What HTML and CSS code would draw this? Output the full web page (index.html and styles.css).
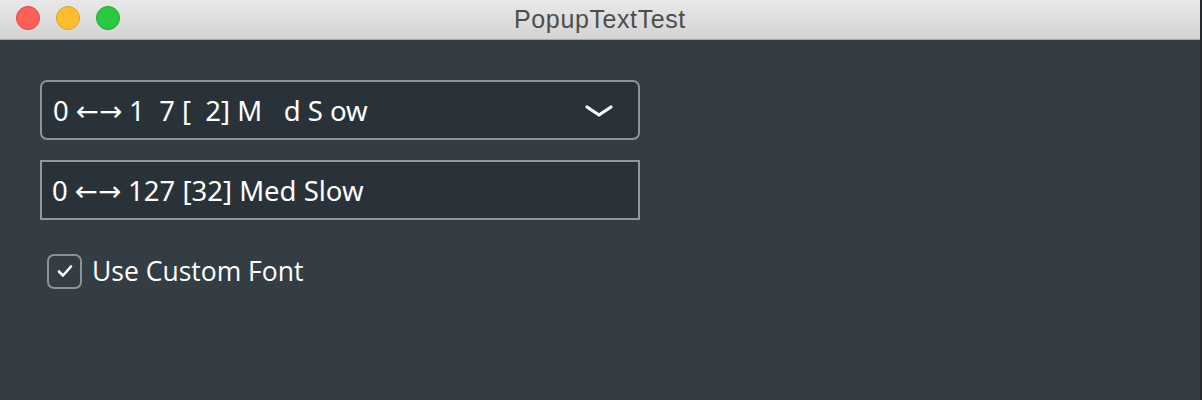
FILE: index.html
```html
<!DOCTYPE html>
<html>
<head>
<meta charset="utf-8">
<link rel="stylesheet" href="styles.css">
</head>
<body>
<div class="window">
  <div class="titlebar">
    <div class="lights">
      <span class="light red"></span>
      <span class="light yellow"></span>
      <span class="light green"></span>
    </div>
    <div class="title">PopupTextTest</div>
  </div>
  <div class="content">
    <div class="popup">
      <span class="popup-text">0 ←→ 1&nbsp;&nbsp;7 [&nbsp;&nbsp;2] M&nbsp;&nbsp;&nbsp;d S ow</span>
      <svg class="chevron" width="30" height="14" viewBox="0 0 30 14"><path d="M3 3 L15 11 L27 3" fill="none" stroke="#ffffff" stroke-width="3.2" stroke-linecap="round" stroke-linejoin="round"/></svg>
    </div>
    <div class="field">0 ←→ 127 [32] Med Slow</div>
    <label class="check">
      <span class="box"><svg width="18" height="16" viewBox="0 0 18 16"><path d="M3 8.5 L7 12.5 L15 3.5" fill="none" stroke="#ffffff" stroke-width="2.6" stroke-linecap="round" stroke-linejoin="round"/></svg></span>
      <span class="check-label">Use Custom Font</span>
    </label>
  </div>
</div>
</body>
</html>
```
FILE: styles.css
```css
* { box-sizing: border-box; }
html, body { margin: 0; padding: 0; }
body { width: 1202px; height: 400px; overflow: hidden; background: #343d44; }
.window { width: 1202px; height: 400px; display: flex; flex-direction: column; border-right: 2px solid #23292d; }
.titlebar {
  height: 40px; flex: none; position: relative;
  background: linear-gradient(#e8e8e8, #d3d3d3);
  border-bottom: 1px solid #a9a9a9;
  display: flex; align-items: center; justify-content: center;
}
.lights { position: absolute; left: 16px; top: 6px; display: flex; gap: 16px; }
.light { width: 24px; height: 24px; border-radius: 50%; display: block; }
.red { background: #fe5f57; border: 1px solid #e0443e; }
.yellow { background: #febc2e; border: 1px solid #dea123; }
.green { background: #28c840; border: 1px solid #1aab29; }
.title { font-family: "Liberation Sans", Arial, sans-serif; font-size: 25px; letter-spacing: 0.6px; color: #4d4d4d; margin-top: -1px; }
.content { flex: 1; padding: 40px 0 0 40px; display: flex; flex-direction: column; align-items: flex-start; }
.popup {
  width: 600px; height: 60px; border: 2px solid #8a959b; border-radius: 7px; background: #293238;
  display: flex; align-items: center; justify-content: space-between; padding: 0 24px 0 11px;
}
.popup-text, .field { font-family: "Noto Sans", "DejaVu Sans", sans-serif; font-size: 27.5px; color: #ffffff; }
.chevron { margin-top: 2px; }
.field {
  margin-top: 20px; width: 600px; height: 60px; border: 2px solid #8e989d; background: #293238;
  display: flex; align-items: center; padding: 0 0 0 10px;
}
.check { margin-top: 33px; margin-left: 7px; display: flex; align-items: center; gap: 10px; }
.box {
  width: 35px; height: 35px; border: 2px solid #8a9398; border-radius: 7px; background: #343d44;
  display: flex; align-items: center; justify-content: center;
}
.check-label { font-family: "Open Sans", "Noto Sans", sans-serif; font-size: 26.5px; color: #ffffff; }
```
